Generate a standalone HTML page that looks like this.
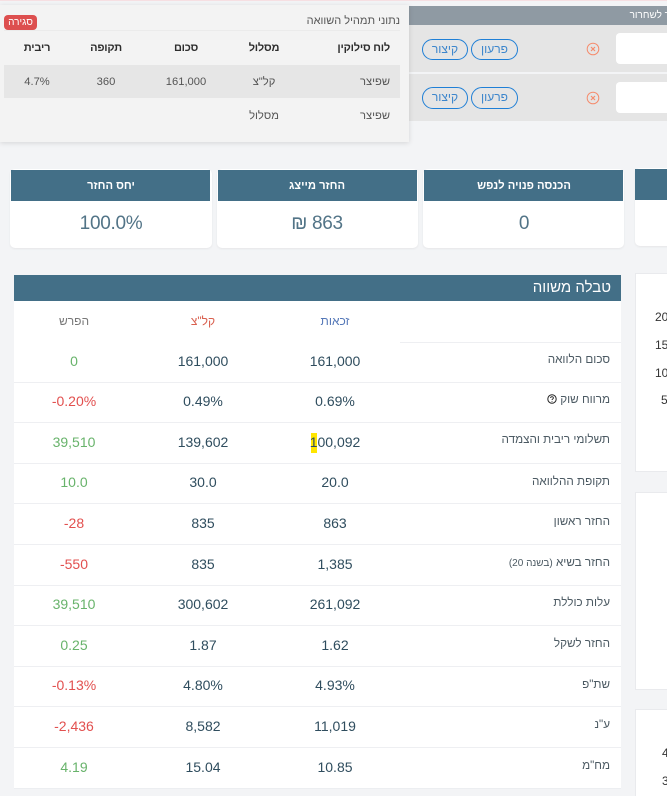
<!DOCTYPE html>
<html lang="he"><head><meta charset="utf-8"><title>טבלה משווה</title>
<style>
html,body{margin:0;padding:0;width:667px;height:796px;overflow:hidden;background:#f3f4f6;font-family:"Liberation Sans","DejaVu Sans",sans-serif}
#p{position:relative;width:667px;height:796px;overflow:hidden}
.b{position:absolute;box-sizing:border-box}
.t{position:absolute;white-space:nowrap;line-height:16px;height:16px;transform:translateX(-50%);direction:ltr}
.h{position:absolute;white-space:nowrap;line-height:16px;height:16px;direction:rtl;transform:translateX(-100%)}
.n{font-size:14px;color:#2f4d5e}
.g{font-size:14px;color:#68b36b}
.r{font-size:14px;color:#e2504f}
.l{font-size:11.7px;color:#4c5a63;margin-top:1px}
.ch{font-size:11.2px;color:#fff;font-weight:bold;margin-top:1px}
.cv{font-size:19px;letter-spacing:-.3px;color:#527487}
.o{font-size:11.2px;color:#555;margin-top:1px}
.ob{font-size:11px;letter-spacing:-.2px;color:#2d2d2d;font-weight:bold;margin-top:1px}
.pill{position:absolute;box-sizing:border-box;border:1px solid #1f7fd6;border-radius:11px;color:#3d86cc;font-size:12px;line-height:19px;text-align:center;direction:rtl}
.ln{position:absolute;height:1px;background:#eeeff2;left:14px;width:607px}
.ax{position:absolute;font-size:12px;color:#333;line-height:12px;white-space:nowrap}
</style></head><body><div id="p">
<div class="b" style="left:0;top:0;width:667px;height:1px;background:#f6dfe2"></div>

<!-- top right rows -->
<div class="b" style="left:409px;top:6px;width:258px;height:19px;background:#8f9aa3"></div>
<div class="h" style="left:691px;top:8px;font-size:10px;color:#fff">תאריך לשחרור</div>
<div class="b" style="left:409px;top:25px;width:258px;height:47px;background:#e5e5e5"></div>
<div class="b" style="left:409px;top:74px;width:258px;height:47px;background:#e5e5e5"></div>
<div class="b" style="left:616px;top:33px;width:60px;height:31px;background:#fff;border-radius:4px"></div>
<div class="b" style="left:616px;top:82px;width:60px;height:31px;background:#fff;border-radius:4px"></div>
<div class="pill" style="left:422px;top:39px;width:46px;height:21px">קיצור</div>
<div class="pill" style="left:471px;top:39px;width:47px;height:21px">פרעון</div>
<div class="pill" style="left:422px;top:87px;width:46px;height:22px">קיצור</div>
<div class="pill" style="left:471px;top:87px;width:47px;height:22px">פרעון</div>
<svg class="b" style="left:586px;top:42px" width="14" height="14" viewBox="0 0 14 14"><circle cx="7" cy="7" r="5.8" fill="none" stroke="#f58b6c" stroke-width="1"/><path d="M5 5l4 4M9 5l-4 4" stroke="#f58b6c" stroke-width="1.2"/></svg>
<svg class="b" style="left:586px;top:91px" width="14" height="14" viewBox="0 0 14 14"><circle cx="7" cy="7" r="5.8" fill="none" stroke="#f58b6c" stroke-width="1"/><path d="M5 5l4 4M9 5l-4 4" stroke="#f58b6c" stroke-width="1.2"/></svg>

<!-- overlay -->
<div class="b" style="left:0;top:5px;width:409px;height:137px;background:#f3f3f3;box-shadow:0 1px 5px rgba(0,0,0,.13)"></div>
<div class="h" style="left:400px;top:13px;font-size:11px;color:#555">נתוני תמהיל השוואה</div>
<div class="b" style="left:4px;top:15px;width:33px;height:15px;background:#dd4f4f;border-radius:4px;color:#fff;font-size:10px;line-height:15px;text-align:center;direction:rtl">סגירה</div>
<div class="b" style="left:4px;top:30px;width:396px;height:1px;background:#ebebeb"></div>
<div class="h ob" style="left:390px;top:39px">לוח סילוקין</div>
<div class="t ob" style="left:264px;top:39px">מסלול</div>
<div class="t ob" style="left:186px;top:39px">סכום</div>
<div class="t ob" style="left:106px;top:39px">תקופה</div>
<div class="t ob" style="left:37px;top:39px">ריבית</div>
<div class="b" style="left:4px;top:65px;width:396px;height:33px;background:#e6e6e6"></div>
<div class="h o" style="left:390px;top:73px">שפיצר</div>
<div class="t o" style="left:264px;top:73px">קל"צ</div>
<div class="t o" style="left:186px;top:73px">161,000</div>
<div class="t o" style="left:106px;top:73px">360</div>
<div class="t o" style="left:37px;top:73px">4.7%</div>
<div class="h o" style="left:390px;top:107px">שפיצר</div>
<div class="t o" style="left:264px;top:107px">מסלול</div>

<!-- cards -->
<div class="b" style="left:10px;top:169px;width:202px;height:79px;background:#fff;border-radius:5px;box-shadow:0 1px 2px rgba(0,0,0,.06)"></div>
<div class="b" style="left:217px;top:169px;width:201px;height:79px;background:#fff;border-radius:5px;box-shadow:0 1px 2px rgba(0,0,0,.06)"></div>
<div class="b" style="left:423px;top:169px;width:201px;height:79px;background:#fff;border-radius:5px;box-shadow:0 1px 2px rgba(0,0,0,.06)"></div>
<div class="b" style="left:635px;top:168px;width:40px;height:78px;background:#fff;border-radius:5px;box-shadow:0 1px 2px rgba(0,0,0,.06)"></div>
<div class="b" style="left:11px;top:170px;width:199px;height:31px;background:#436f87"></div>
<div class="b" style="left:218px;top:170px;width:199px;height:31px;background:#436f87"></div>
<div class="b" style="left:424px;top:170px;width:199px;height:31px;background:#436f87"></div>
<div class="b" style="left:635px;top:169px;width:40px;height:31px;background:#436f87"></div>
<div class="t ch" style="left:111px;top:177px">יחס החזר</div>
<div class="t ch" style="left:317px;top:177px">החזר מייצג</div>
<div class="t ch" style="left:524px;top:177px">הכנסה פנויה לנפש</div>
<div class="t cv" style="left:111px;top:216px">100.0%</div>
<div class="t cv" style="left:317px;top:216px">₪ 863</div>
<div class="t cv" style="left:524px;top:216px">0</div>

<!-- table -->
<div class="b" style="left:14px;top:275px;width:607px;height:513px;background:#fff"></div>
<div class="b" style="left:14px;top:275px;width:607px;height:26px;background:#436f87"></div>
<div class="h" style="left:611px;top:280px;font-size:15px;color:#fff">טבלה משווה</div>
<div class="t" style="left:335px;top:313px;font-size:12px;color:#5578b8">זכאות</div>
<div class="t" style="left:203px;top:313px;font-size:12px;color:#d9604f">קל"צ</div>
<div class="t" style="left:74px;top:313px;font-size:12px;color:#777">הפרש</div>
<div class="b" style="left:400px;top:342px;width:221px;height:1px;background:#eeeff2"></div>
<div class="ln" style="top:382px"></div><div class="ln" style="top:422px"></div><div class="ln" style="top:463px"></div><div class="ln" style="top:503px"></div><div class="ln" style="top:544px"></div><div class="ln" style="top:585px"></div><div class="ln" style="top:625px"></div><div class="ln" style="top:666px"></div><div class="ln" style="top:706px"></div><div class="ln" style="top:747px"></div><div class="ln" style="top:788px;background:#eceef1"></div>

<div class="h l" style="left:610px;top:351px">סכום הלוואה</div>
<div class="t n" style="left:335px;top:353px">161,000</div><div class="t n" style="left:203px;top:353px">161,000</div><div class="t g" style="left:74px;top:353px">0</div>

<div class="h l" style="left:610px;top:391px">מרווח שוק</div>
<svg class="b" style="left:547px;top:394px" width="10" height="10" viewBox="0 0 10 10"><circle cx="5" cy="5" r="4.2" fill="none" stroke="#222" stroke-width="1"/><path d="M3.6 4c0-1.8 2.8-1.8 2.8 0 0 1-1.4 1-1.4 2" fill="none" stroke="#222" stroke-width=".9"/><circle cx="5" cy="7.4" r=".5" fill="#222"/></svg>
<div class="t n" style="left:335px;top:393px">0.69%</div><div class="t n" style="left:203px;top:393px">0.49%</div><div class="t r" style="left:74px;top:393px">-0.20%</div>

<div class="h l" style="left:610px;top:431px">תשלומי ריבית והצמדה</div>
<div class="b" style="left:311px;top:433px;width:6px;height:20px;background:#ffe600"></div>
<div class="t n" style="left:335px;top:434px">100,092</div><div class="t n" style="left:203px;top:434px">139,602</div><div class="t g" style="left:74px;top:434px">39,510</div>

<div class="h l" style="left:610px;top:473px">תקופת ההלוואה</div>
<div class="t n" style="left:335px;top:474px">20.0</div><div class="t n" style="left:203px;top:474px">30.0</div><div class="t g" style="left:74px;top:474px">10.0</div>

<div class="h l" style="left:610px;top:513px">החזר ראשון</div>
<div class="t n" style="left:335px;top:515px">863</div><div class="t n" style="left:203px;top:515px">835</div><div class="t r" style="left:74px;top:515px">-28</div>

<div class="h l" style="left:610px;top:554px">החזר בשיא <span style="font-size:10px">(בשנה 20)</span></div>
<div class="t n" style="left:335px;top:556px">1,385</div><div class="t n" style="left:203px;top:556px">835</div><div class="t r" style="left:74px;top:556px">-550</div>

<div class="h l" style="left:610px;top:594px">עלות כוללת</div>
<div class="t n" style="left:335px;top:596px">261,092</div><div class="t n" style="left:203px;top:596px">300,602</div><div class="t g" style="left:74px;top:596px">39,510</div>

<div class="h l" style="left:610px;top:635px">החזר לשקל</div>
<div class="t n" style="left:335px;top:637px">1.62</div><div class="t n" style="left:203px;top:637px">1.87</div><div class="t g" style="left:74px;top:637px">0.25</div>

<div class="h l" style="left:610px;top:676px">שת"פ</div>
<div class="t n" style="left:335px;top:677px">4.93%</div><div class="t n" style="left:203px;top:677px">4.80%</div><div class="t r" style="left:74px;top:677px">-0.13%</div>

<div class="h l" style="left:610px;top:716px">ע"נ</div>
<div class="t n" style="left:335px;top:718px">11,019</div><div class="t n" style="left:203px;top:718px">8,582</div><div class="t r" style="left:74px;top:718px">-2,436</div>

<div class="h l" style="left:610px;top:757px">מח"מ</div>
<div class="t n" style="left:335px;top:759px">10.85</div><div class="t n" style="left:203px;top:759px">15.04</div><div class="t g" style="left:74px;top:759px">4.19</div>

<!-- right chart cards -->
<div class="b" style="left:635px;top:273px;width:40px;height:199px;background:#fff;border:1px solid #e9eaed"></div>
<div class="b" style="left:635px;top:492px;width:40px;height:198px;background:#fff;border:1px solid #e9eaed"></div>
<div class="b" style="left:635px;top:709px;width:40px;height:100px;background:#fff;border:1px solid #e9eaed"></div>
<div class="ax" style="left:655px;top:311px">20</div>
<div class="ax" style="left:655px;top:339px">15</div>
<div class="ax" style="left:655px;top:367px">10</div>
<div class="ax" style="left:661px;top:394px">5</div>
<div class="ax" style="left:662px;top:747px">4</div>
<div class="ax" style="left:662px;top:775px">3</div>
</div></body></html>
